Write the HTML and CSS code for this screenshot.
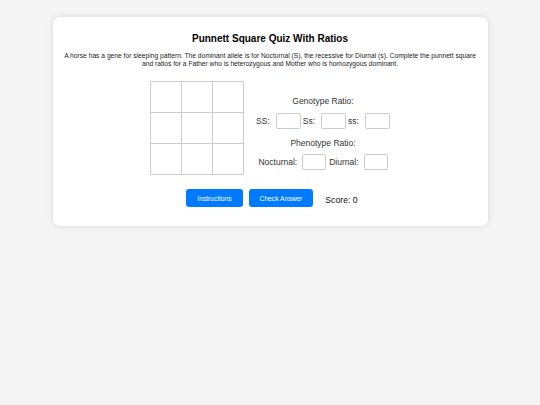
FILE: index.html
```html
<!DOCTYPE html>
<html lang="en">
<head>
  <meta charset="UTF-8" />
  <meta name="viewport" content="width=device-width, initial-scale=1.0"/>
  <title>Punnett Square Quiz With Ratios</title>
  <link rel="stylesheet" href="styles.css">
</head>
<body>

  <div class="card">
    <h1>Punnett Square Quiz With Ratios</h1>
    <p class="question">A horse has a gene for sleeping pattern. The dominant allele is for Nocturnal (S), the recessive for Diurnal (s). Complete the punnett square and ratios for a Father who is heterozygous and Mother who is homozygous dominant.</p>

    <div class="quiz">
      <table class="punnett">
        <tr><td></td><td></td><td></td></tr>
        <tr><td></td><td></td><td></td></tr>
        <tr><td></td><td></td><td></td></tr>
      </table>

      <div class="ratios">
        <div class="ratio-title">Genotype Ratio:</div>
        <div class="ratio-row">
          <label for="ss-dom">SS:</label>
          <input type="text" id="ss-dom">
          <label for="ss-het">Ss:</label>
          <input type="text" id="ss-het">
          <label for="ss-rec">ss:</label>
          <input type="text" id="ss-rec">
        </div>
        <div class="ratio-title">Phenotype Ratio:</div>
        <div class="ratio-row pheno">
          <label for="noct">Nocturnal:</label>
          <input type="text" id="noct">
          <label for="diur">Diurnal:</label>
          <input type="text" id="diur">
        </div>
      </div>
    </div>

    <div class="actions">
      <button class="btn">Instructions</button>
      <button class="btn">Check Answer</button>
      <span class="score">Score: 0</span>
    </div>
  </div>

</body>
</html>
```

FILE: styles.css
```css
body {
  font-family: Arial, "Liberation Sans", sans-serif;
  background: #f4f4f4;
  color: #222;
  margin: 0;
  padding: 17px 0;
}
.card {
  box-sizing: border-box;
  width: 435px;
  margin: 0 auto;
  padding: 16px 10px 19px;
  background: #fff;
  border-radius: 7px;
  box-shadow: 0 0 6px rgba(0, 0, 0, 0.12);
}
h1 {
  margin: 0;
  font-size: 10px;
  line-height: 12px;
  text-align: center;
  color: #000;
}
.question {
  margin: 7px 0 0;
  font-size: 6.7px;
  line-height: 7.5px;
  text-align: center;
}
.quiz {
  display: flex;
  justify-content: center;
  align-items: flex-start;
  gap: 12px;
  margin-top: 14px;
}
.punnett {
  border-collapse: collapse;
}
.punnett td {
  width: 30px;
  height: 30px;
  padding: 0;
  border: 1px solid #ccc;
}
.ratios {
  display: flex;
  flex-direction: column;
  align-items: center;
  padding-top: 15px;
  font-size: 8.5px;
  color: #333;
}
.ratio-title {
  line-height: 10px;
}
.ratio-row {
  display: flex;
  align-items: center;
  margin: 7px 0 9px;
}
.ratio-row.pheno {
  margin: 6px 0 0;
}
.ratio-row label {
  margin-right: 6px;
}
.ratio-row.pheno label {
  margin-right: 5px;
}
.ratio-row input {
  box-sizing: border-box;
  width: 25px;
  height: 16px;
  margin: 0 2px 0 0;
  padding: 0;
  border: 1px solid #ccc;
  border-radius: 2px;
}
.ratio-row.pheno input {
  width: 24px;
  margin-right: 3px;
}
.ratio-row input:last-child {
  margin-right: 0;
}
.actions {
  display: flex;
  justify-content: center;
  align-items: flex-start;
  gap: 6px;
  margin-top: 14px;
  padding-left: 4px;
}
.btn {
  height: 18px;
  padding: 0 11px;
  font-family: Arial, "Liberation Sans", sans-serif;
  font-size: 6.7px;
  color: #fff;
  background: #007bff;
  border: none;
  border-radius: 3px;
}
.score {
  margin: 6px 0 0 6px;
  font-size: 8.7px;
  line-height: 10px;
  color: #111;
}
```
